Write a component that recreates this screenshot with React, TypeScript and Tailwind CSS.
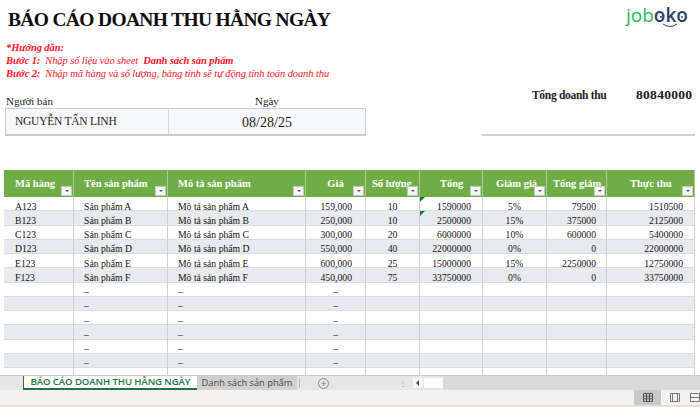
const rows = [
  ["A123", "Sản phẩm A", "Mô tả sản phẩm A", "159,000", "10", "1590000", "5%", "79500", "1510500"],
  ["B123", "Sản phẩm B", "Mô tả sản phẩm B", "250,000", "10", "2500000", "15%", "375000", "2125000"],
  ["C123", "Sản phẩm C", "Mô tả sản phẩm C", "300,000", "20", "6000000", "10%", "600000", "5400000"],
  ["D123", "Sản phẩm D", "Mô tả sản phẩm D", "550,000", "40", "22000000", "0%", "0", "22000000"],
  ["E123", "Sản phẩm E", "Mô tả sản phẩm E", "600,000", "25", "15000000", "15%", "2250000", "12750000"],
  ["F123", "Sản phẩm F", "Mô tả sản phẩm F", "450,000", "75", "33750000", "0%", "0", "33750000"],
  ["", "–", "–", "–", "", "", "", "", ""],
  ["", "–", "–", "–", "", "", "", "", ""],
  ["", "–", "–", "–", "", "", "", "", ""],
  ["", "–", "–", "–", "", "", "", "", ""],
  ["", "–", "–", "–", "", "", "", "", ""],
  ["", "–", "–", "–", "", "", "", "", ""],
  ["", "", "", "", "", "", "", "", ""],
];

const headers = [
  { label: "Mã hàng", cls: "pl-[11px] text-left" },
  { label: "Tên sản phẩm", cls: "pl-[10px] text-left" },
  { label: "Mô tả sản phẩm", cls: "pl-[10px] text-left" },
  { label: "Giá", cls: "text-center" },
  { label: "Số lượng", cls: "pl-[6px] text-left" },
  { label: "Tổng", cls: "pl-[20px] text-left" },
  { label: "Giảm giá", cls: "pl-[13px] text-left" },
  { label: "Tổng giảm", cls: "pl-[6px] text-left" },
  { label: "Thực thu", cls: "pl-[23px] text-left" },
];

const cellAlign = [
  "pl-[11px] text-left",
  "pl-[10px] text-left",
  "pl-[10px] text-left",
  "pr-[13px] text-right",
  "text-center",
  "pr-[11px] text-right",
  "text-center",
  "pr-[10px] text-right",
  "pr-[11px] text-right",
];

const colWidths = "grid-cols-[70px_94px_138px_60px_54px_63px_64px_60px_88px]";

function FilterButton() {
  return (
    <span className="absolute right-[1px] bottom-[1px] flex h-[10px] w-[11px] items-center justify-center border border-[#c8c8c8] bg-[#f6f6f6]">
      <span className="h-0 w-0 border-x-[2px] border-t-[2px] border-x-transparent border-t-[#555]" />
    </span>
  );
}

function Logo() {
  return (
    <div className="relative h-[26px] w-[62px] font-['Open_Sans',sans-serif] text-[19px] leading-[24px]">
      <span className="text-[#1db954]">job</span>
      <span className="font-semibold text-[#2c3e63]">oko</span>
      <span className="absolute top-[13px] left-[34px] h-[2px] w-[2px] rounded-full bg-[#2c3e63]" />
      <span className="absolute top-[13px] left-[55px] h-[2px] w-[2px] rounded-full bg-[#2c3e63]" />
      <svg className="absolute top-[20px] left-[36px]" width="16" height="6" viewBox="0 0 16 6">
        <path d="M1 1 Q8 6 15 1" fill="none" stroke="#2c3e63" strokeWidth="1" />
      </svg>
    </div>
  );
}

export default function App() {
  return (
    <div className="flex h-[407px] w-[700px] flex-col overflow-hidden bg-white font-['Liberation_Serif',serif] text-[#1c1c1c]">
      <div className="flex h-[170px] shrink-0 flex-col">
        <div className="flex h-[41px] items-start justify-between">
          <h1 className="pt-[6px] pl-[8px] text-[19.5px] leading-[28px] font-bold tracking-[-0.67px] text-[#0c0c0c]">
            BÁO CÁO DOANH THU HẰNG NGÀY
          </h1>
          <div className="pt-[3px] pr-[12px]">
            <Logo />
          </div>
        </div>

        <div className="flex flex-col pl-[6px] text-[10.5px] leading-[13px] tracking-[-0.1px] text-[#ff0f1f] italic">
          <p className="font-bold">*Hướng dẫn:</p>
          <p>
            <b>Bước 1:</b>&nbsp; Nhập số liệu vào sheet&nbsp; <b>Danh sách sản phẩm</b>
          </p>
          <p>
            <b>Bước 2:</b>&nbsp; Nhập mã hàng và số lượng, bảng tính sẽ tự động tính toán doanh thu
          </p>
        </div>

        <div className="mt-[15px] flex">
          <div className="flex w-[366px] flex-col pl-[5px]">
            <div className="flex pl-[1px] text-[11px] leading-[13px]">
              <span className="w-[161px]">Người bán</span>
              <span className="w-[161px] pl-[88px]">Ngày</span>
            </div>
            <div className="flex h-[28px] border border-b-2 border-[#c9ccd0] text-[14px]">
              <div className="flex w-[162px] items-center bg-[#f7f8f9] pt-[1px] pl-[9px] text-[11.5px] tracking-[-0.25px]">
                NGUYỄN TẤN LINH
              </div>
              <div className="flex flex-1 items-center justify-center border-l border-[#d4d6d9] bg-[#f7f8f9] pt-[1px]">
                08/28/25
              </div>
            </div>
          </div>
          <div className="relative flex flex-1 flex-col">
            <div className="absolute -top-[8px] left-[166px] flex items-end text-[11.5px] leading-[14px] font-bold">
              <span className="w-[104px] tracking-[-0.3px]">Tổng doanh thu</span>
              <span className="text-[13.5px] leading-[15px] tracking-[0.3px]">80840000</span>
            </div>
            <div className="mt-[39px] ml-[116px] h-[2px] w-[213px] bg-[#d2d2d2]" />
          </div>
        </div>
      </div>

      <div className="ml-[4px] h-[205px] w-[691px] shrink-0 overflow-hidden">
        <div className={`grid h-[27px] ${colWidths} bg-[#70ad47] text-[10.5px] leading-[14px] font-bold text-white`}>
          {headers.map((h) => (
            <div key={h.label} className={`relative border-r border-[#a9cb92] pt-[7px] whitespace-nowrap ${h.cls}`}>
              {h.label}
              <FilterButton />
            </div>
          ))}
        </div>
        {rows.map((row, i) => (
          <div
            key={i}
            className={`grid h-[14.27px] ${colWidths} text-[9.7px] leading-[12px] text-[#111] ${i % 2 === 1 ? "bg-[#e7eaef]" : "bg-white"} border-b border-[#d9dbde]`}
          >
            {row.map((cell, j) => (
              <div
                key={j}
                className={`relative border-r border-[#d0d0d0] pt-[3.5px] whitespace-nowrap ${cellAlign[j]} ${j === 3 && cell === "–" ? "pr-[27px]" : ""}`}
              >
                {j === 5 && i < 2 && (
                  <span className="absolute top-0 left-0 h-0 w-0 border-t-[5px] border-r-[5px] border-t-[#107c41] border-r-transparent" />
                )}
                {cell}
              </div>
            ))}
          </div>
        ))}
      </div>

      <div className="flex h-[15px] shrink-0 items-stretch border-t border-[#c8c8c8] bg-[#e6e6e6] font-['Open_Sans',sans-serif] text-[9.6px] leading-[14px] whitespace-nowrap">
        <div className="w-[23px]" />
        <div className="flex w-[174px] items-center justify-center border-b-2 border-l border-[#217346] bg-white font-semibold tracking-[-0.1px] text-[#217346]">
          BÁO CÁO DOANH THU HẰNG NGÀY
        </div>
        <div className="flex w-[100px] items-center justify-center bg-[#d0d0d0] text-[9.3px] text-[#444]">
          Danh sách sản phẩm
        </div>
        <div className="my-[2px] ml-[2px] w-px bg-[#b5b5b5]" />
        <div className="ml-[18px] flex items-center">
          <span className="flex h-[11px] w-[11px] items-center justify-center rounded-full border border-[#8a8a8a] text-[10px] leading-none text-[#777]">
            +
          </span>
        </div>
        <div className="ml-[70px] flex items-center text-[8px] tracking-tight text-[#999]">⋮</div>
        <div className="ml-[6px] flex items-center">
          <span className="flex h-[10px] w-[10px] items-center justify-center bg-[#f8f8f8]">
            <span className="h-0 w-0 border-y-[3px] border-r-[3px] border-y-transparent border-r-[#444]" />
          </span>
          <span className="ml-[1px] h-[10px] w-[19px] bg-white" />
        </div>
        <div className="flex-1 bg-[#dadada]" />
      </div>

      <div className="flex h-[15px] shrink-0 justify-end bg-[#f3f2f1]">
        <div className="flex h-full w-[27px] items-center justify-center bg-[#c9c9c9]">
          <svg width="10" height="9" viewBox="0 0 10 9" fill="none" stroke="#555" strokeWidth="1">
            <path d="M.5.5h9v8h-9zM3.5.5v8M6.5.5v8M.5 3.2h9M.5 5.8h9" />
          </svg>
        </div>
        <div className="flex h-full w-[27px] items-center justify-center">
          <svg width="10" height="9" viewBox="0 0 10 9" fill="none" stroke="#777" strokeWidth="1">
            <path d="M.5.5h9v8h-9zM2.5.5v8M7.5.5v8" />
          </svg>
        </div>
        <div className="flex h-full w-[12px] items-center justify-start pl-[2px]">
          <svg width="10" height="9" viewBox="0 0 10 9" fill="none" stroke="#777" strokeWidth="1">
            <path d="M.5.5h9v8h-9zM.5 4.5h9" />
          </svg>
        </div>
      </div>
      <div className="h-[2px] shrink-0 bg-[#e9dfd4]" />
    </div>
  );
}
